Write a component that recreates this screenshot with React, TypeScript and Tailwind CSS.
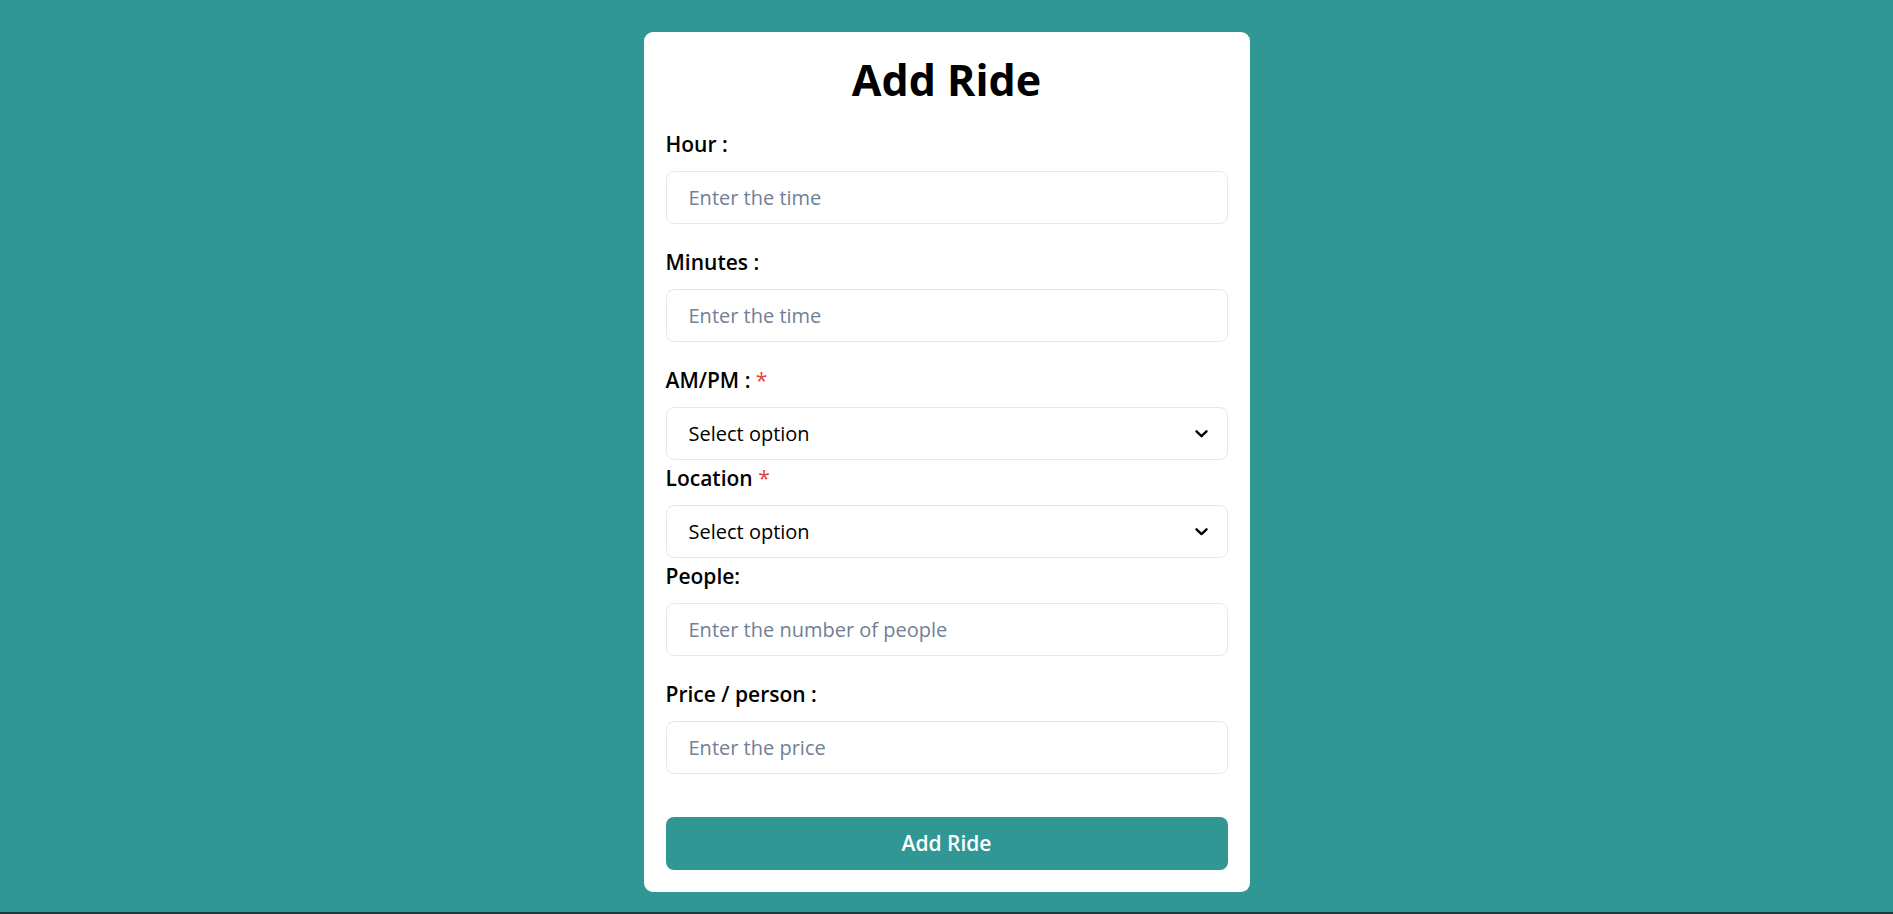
import React, { useState } from 'react';

const inputClass =
  'block w-full h-[53px] px-[22px] bg-white border border-[#e2e8f0] rounded-[8px] text-[20px] text-black placeholder-[#718096] outline-none focus:border-[#319795]';

const Label: React.FC<{ text: string; required?: boolean }> = ({ text, required }) => (
  <label className="block h-[30px] leading-[30px] text-[21px] font-semibold text-black mb-[12px]">
    {text}
    {required && <span className="text-[#e53e3e] font-normal"> *</span>}
  </label>
);

const Chevron = () => (
  <svg
    className="pointer-events-none absolute right-[20px] top-1/2 -translate-y-1/2"
    width="13"
    height="9"
    viewBox="0 0 13 9"
    fill="none"
  >
    <path d="M1.5 1.8 L6.5 6.6 L11.5 1.8" stroke="#000" strokeWidth="2.4" strokeLinecap="round" strokeLinejoin="round" />
  </svg>
);

const SelectField: React.FC<{ value: string; onChange: (v: string) => void; options: string[] }> = ({ value, onChange, options }) => (
  <div className="relative mb-[3px]">
    <select
      value={value}
      onChange={(e) => onChange(e.target.value)}
      className={inputClass + ' appearance-none cursor-pointer text-[20.5px]'}
    >
      <option value="">Select option</option>
      {options.map((o) => (
        <option key={o} value={o}>{o}</option>
      ))}
    </select>
    <Chevron />
  </div>
);

export default function App() {
  const [hour, setHour] = useState('');
  const [minutes, setMinutes] = useState('');
  const [ampm, setAmpm] = useState('');
  const [location, setLocation] = useState('');
  const [people, setPeople] = useState('');
  const [price, setPrice] = useState('');

  const handleSubmit = (e: React.FormEvent) => {
    e.preventDefault();
  };

  return (
    <div className="h-[914px] bg-[#319795] border-b-2 border-[#1c3b3a] flex justify-center font-['Open_Sans',sans-serif]">
      <div className="w-[606px] h-[860px] mt-[32px] bg-white rounded-[9px] px-[22px] pt-[22px] pb-[21px]">
        <h1 className="text-center text-[43px] leading-[52px] font-bold text-black mb-[23px]">Add Ride</h1>

        <form onSubmit={handleSubmit}>
          <Label text="Hour :" />
          <input
            type="number"
            value={hour}
            onChange={(e) => setHour(e.target.value)}
            placeholder="Enter the time"
            className={inputClass + ' mb-[23px]'}
          />

          <Label text="Minutes :" />
          <input
            type="number"
            value={minutes}
            onChange={(e) => setMinutes(e.target.value)}
            placeholder="Enter the time"
            className={inputClass + ' mb-[23px]'}
          />

          <Label text="AM/PM :" required />
          <SelectField value={ampm} onChange={setAmpm} options={['AM', 'PM']} />

          <Label text="Location" required />
          <SelectField value={location} onChange={setLocation} options={['Campus', 'Airport', 'Downtown']} />

          <Label text="People:" />
          <input
            type="number"
            value={people}
            onChange={(e) => setPeople(e.target.value)}
            placeholder="Enter the number of people"
            className={inputClass + ' mb-[23px]'}
          />

          <Label text="Price / person :" />
          <input
            type="number"
            value={price}
            onChange={(e) => setPrice(e.target.value)}
            placeholder="Enter the price"
            className={inputClass}
          />

          <div className="pt-[43px]">
            <button
              type="submit"
              className="block w-full h-[53px] rounded-[8px] bg-[#319795] text-white text-[21px] font-semibold hover:bg-[#2c7a7b] transition-colors"
            >
              Add Ride
            </button>
          </div>
        </form>
      </div>
    </div>
  );
}
